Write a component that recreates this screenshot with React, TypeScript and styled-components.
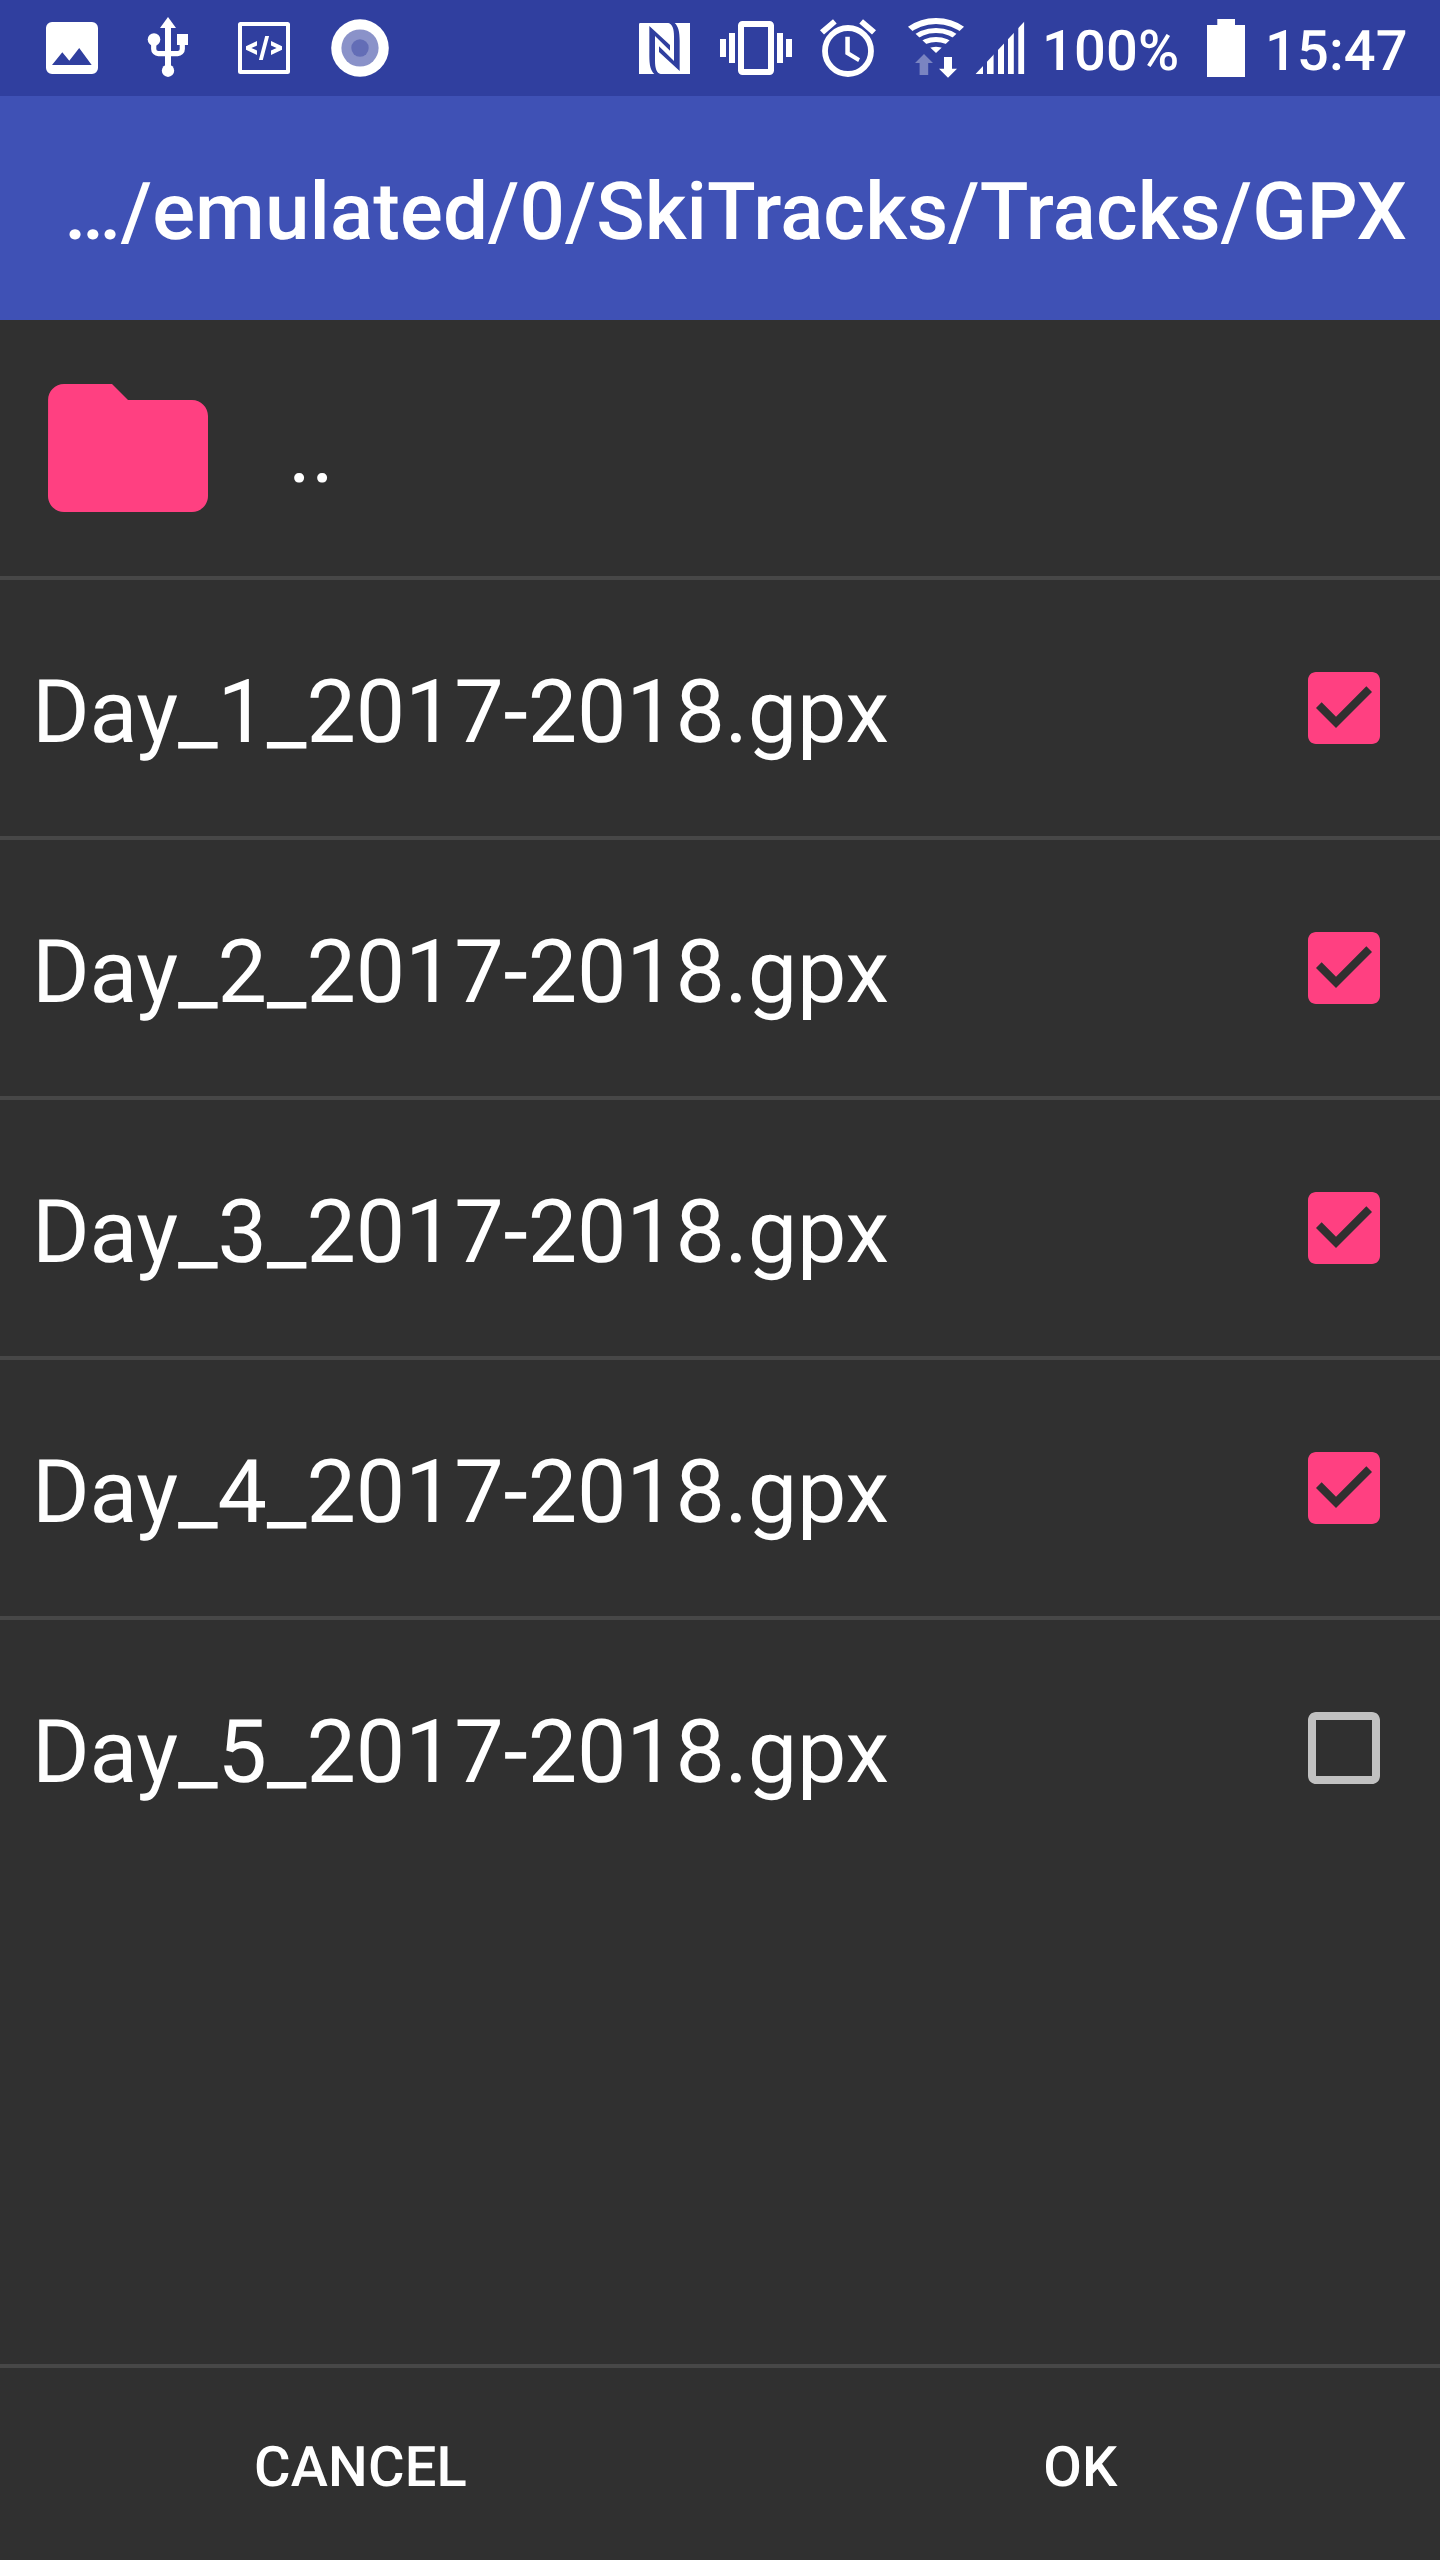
import React, { useState } from "react";
import styled, { createGlobalStyle } from "styled-components";

const GlobalStyle = createGlobalStyle`
  *, *::before, *::after { box-sizing: border-box; }
  body { margin: 0; background: #303030; }
`;

const Screen = styled.div`
  width: 1440px;
  height: 2560px;
  display: flex;
  flex-direction: column;
  background: #303030;
  color: #fff;
  font-family: Roboto, "Noto Sans", sans-serif;
  text-rendering: geometricPrecision;
  overflow: hidden;
`;

const StatusBar = styled.div`
  flex: none;
  height: 96px;
  padding-left: 24px;
  display: flex;
  background: #303f9f;
`;

const Notifications = styled.div`
  display: flex;
  width: 615px;
`;

const Indicators = styled.div`
  display: flex;
  flex: 1;
`;

const Glyph = styled.svg<{ $w: number; $gap?: number }>`
  display: block;
  flex: none;
  width: ${(p) => p.$w}px;
  height: 96px;
  margin-left: ${(p) => p.$gap ?? 0}px;
  fill: #fff;
`;

const StatusText = styled.span<{ $w: number; $gap: number }>`
  flex: none;
  width: ${(p) => p.$w}px;
  margin-left: ${(p) => p.$gap}px;
  padding-top: 18px;
  font-size: 56px;
  line-height: 66px;
  font-weight: 500;
  letter-spacing: 0.15px;
  white-space: nowrap;
`;

const AppBar = styled.header`
  flex: none;
  height: 224px;
  padding: 8px 33px 0 64px;
  display: flex;
  align-items: center;
  justify-content: flex-end;
  background: #3f51b5;
`;

const Title = styled.h1`
  margin: 0;
  font-size: 80px;
  line-height: 94px;
  font-weight: 500;
  letter-spacing: 0.1px;
  white-space: nowrap;
`;

const List = styled.main`
  flex: 1;
  display: flex;
  flex-direction: column;
`;

const Row = styled.div<{ $last?: boolean }>`
  height: ${(p) => (p.$last ? 256 : 260)}px;
  flex: none;
  padding: 0 48px 0 32px;
  display: flex;
  align-items: center;
  border-bottom: ${(p) => (p.$last ? "none" : "4px solid #474747")};
`;

const FolderIcon = styled.svg`
  width: 192px;
  height: 192px;
  flex: none;
  margin-right: 64px;
  fill: #ff4081;
`;

const Name = styled.span`
  flex: 1;
  padding-top: 10px;
  font-size: 88px;
  line-height: 104px;
  letter-spacing: -0.18px;
  white-space: nowrap;
`;

const CheckButton = styled.button`
  width: 96px;
  height: 96px;
  padding: 0;
  border: 0;
  background: none;
  cursor: pointer;
`;

const CheckIcon = styled.svg<{ $on: boolean }>`
  display: block;
  width: 96px;
  height: 96px;
  fill: ${(p) => (p.$on ? "#ff4081" : "#c1c1c1")};
`;

const Footer = styled.footer`
  flex: none;
  height: 196px;
  display: grid;
  grid-template-columns: 1fr 1fr;
  border-top: 4px solid #474747;
`;

const Action = styled.button`
  border: 0;
  padding: 6px 0 0 1px;
  background: none;
  color: #fff;
  font-family: inherit;
  font-size: 56px;
  line-height: 66px;
  font-weight: 500;
  letter-spacing: 0.2px;
  text-rendering: inherit;
  cursor: pointer;
`;

const CHECKED =
  "M19 3H5c-1.11 0-2 .9-2 2v14c0 1.1.89 2 2 2h14c1.11 0 2-.9 2-2V5c0-1.1-.89-2-2-2zm-9 14l-5-5 1.41-1.41L10 14.17l7.59-7.59L19 8l-9 9z";
const UNCHECKED =
  "M19 5v14H5V5h14m0-2H5c-1.1 0-2 .9-2 2v14c0 1.1.9 2 2 2h14c1.1 0 2-.9 2-2V5c0-1.1-.9-2-2-2z";

function Status() {
  return (
    <StatusBar>
      <Notifications>
        <Glyph $w={96} viewBox="0 0 96 96">
          <path
            fillRule="evenodd"
            d="M28 22h40a6 6 0 0 1 6 6v40a6 6 0 0 1-6 6H28a6 6 0 0 1-6-6V28a6 6 0 0 1 6-6zM28 65h39.7L55.2 48 45.3 60.8 38.3 52.3z"
          />
        </Glyph>
        <Glyph $w={96} viewBox="0 0 96 96">
          <path d="M48 17l8 11H40z" />
          <path d="M45 27h6v40h-6zM57 34h11v11H57z" />
          <circle cx="34" cy="39.5" r="6.3" />
          <circle cx="48" cy="70.7" r="6.2" />
          <path
            d="M33.7 40v9a4.6 4.6 0 0 0 4.6 4.6h19.4a4.6 4.6 0 0 0 4.6-4.6v-6"
            fill="none"
            stroke="#fff"
            strokeWidth="5.2"
          />
        </Glyph>
        <Glyph $w={96} viewBox="0 0 96 96">
          <rect x="24" y="24" width="48" height="48" rx="0.5" fill="none" stroke="#fff" strokeWidth="4" strokeLinejoin="round" />
          <path d="M41 41v4.6L35.4 48l5.6 2.4V55l-11-5.3v-3.4zM55 41v4.6l5.6 2.4-5.6 2.4V55l11-5.3v-3.4zM49.2 36h3.9L46.8 60h-3.9z" />
        </Glyph>
        <Glyph $w={96} viewBox="0 0 96 96">
          <circle cx="48" cy="48" r="28.8" />
          <circle cx="48" cy="48" r="18.6" fill="#8a92c9" />
          <circle cx="48" cy="48" r="8.7" fill="#636db6" />
        </Glyph>
      </Notifications>
      <Indicators>
        <Glyph $w={51} viewBox="57 0 153 288">
          <path d="M61 69h149v153H57V73a4 4 0 0 1 4-4z" />
          <path
            fill="#303f9f"
            d="M88 78L150 135V152L105 108V182C105 205 110 219 122 222H103C92 212 88 196 88 168zM179 213L117 156V139L162 183V109C162 86 157 72 145 69H164C175 79 179 95 179 123z"
          />
        </Glyph>
        <Glyph $w={72} $gap={30} viewBox="0 0 72 96">
          <rect x="21" y="24" width="30" height="48" rx="1.5" fill="none" stroke="#fff" strokeWidth="6" />
          <path d="M0 39h6v18H0zM9 33h6v30H9zM57 33h6v30h-6zM66 39h6v18h-6z" />
        </Glyph>
        <Glyph $w={56} $gap={28} viewBox="0 0 56 96">
          <circle cx="28" cy="51" r="23" fill="none" stroke="#fff" strokeWidth="5.8" />
          <path d="M0 30.2L4 34.4 16.7 23.5 13 19.2zM56 30.2L52 34.4 39.3 23.5 43 19.2zM25.3 36.7H29.8V52L40 58.2 38.2 62 25.3 54.2z" />
        </Glyph>
        <Glyph $w={56} $gap={32} viewBox="0 0 56 96">
          <clipPath id="fan">
            <path d="M28 53L-15 12.6V0H71V12.6z" />
          </clipPath>
          <g clipPath="url(#fan)">
            <g fill="none" stroke="#fff">
              <circle cx="28" cy="66.5" r="45.5" strokeWidth="6" />
              <circle cx="28" cy="66.5" r="36" strokeWidth="5.2" />
              <circle cx="28" cy="66.5" r="27" strokeWidth="5.2" />
            </g>
            <circle cx="28" cy="66.5" r="19.7" />
          </g>
          <path d="M16 54l9 9h-4.8v12h-8.6V63H7z" fill="#7a84c1" />
          <path d="M36 57h8v11.7h5L40 77.8 31 68.7h5z" />
        </Glyph>
        <Glyph $w={50} $gap={11} viewBox="0 0 50 96">
          <clipPath id="ramp">
            <path d="M.6 74L49.4 21.6V74z" />
          </clipPath>
          <path
            clipPath="url(#ramp)"
            d="M0 20h8v54H0zM12 20h6.6v54H12zM23 20h6v54h-6zM33 20h5.8v54H33zM43.3 20h6v54h-6z"
          />
        </Glyph>
        <StatusText $w={165} $gap={17}>100%</StatusText>
        <Glyph $w={38} viewBox="0 0 38 96">
          <path d="M10.3 19H28v6h10v52H0V25h10.3z" />
        </Glyph>
        <StatusText $w={150} $gap={20}>15:47</StatusText>
      </Indicators>
    </StatusBar>
  );
}

export default function App() {
  const [files, setFiles] = useState(
    [1, 2, 3, 4, 5].map((n) => ({ name: `Day_${n}_2017-2018.gpx`, checked: n < 5 }))
  );
  const toggle = (i: number) =>
    setFiles((fs) => fs.map((f, k) => (k === i ? { ...f, checked: !f.checked } : f)));

  return (
    <>
      <GlobalStyle />
      <Screen>
        <Status />
        <AppBar>
          <Title>…/emulated/0/SkiTracks/Tracks/GPX</Title>
        </AppBar>
        <List>
          <Row>
            <FolderIcon viewBox="0 0 24 24">
              <path d="M10 4H4c-1.1 0-1.99.9-1.99 2L2 18c0 1.1.9 2 2 2h16c1.1 0 2-.9 2-2V8c0-1.1-.9-2-2-2h-8l-2-2z" />
            </FolderIcon>
            <Name>..</Name>
          </Row>
          {files.map((f, i) => (
            <Row key={f.name} $last={i === files.length - 1}>
              <Name>{f.name}</Name>
              <CheckButton onClick={() => toggle(i)} aria-pressed={f.checked}>
                <CheckIcon $on={f.checked} viewBox="0 0 24 24">
                  <path d={f.checked ? CHECKED : UNCHECKED} />
                </CheckIcon>
              </CheckButton>
            </Row>
          ))}
        </List>
        <Footer>
          <Action>CANCEL</Action>
          <Action>OK</Action>
        </Footer>
      </Screen>
    </>
  );
}
